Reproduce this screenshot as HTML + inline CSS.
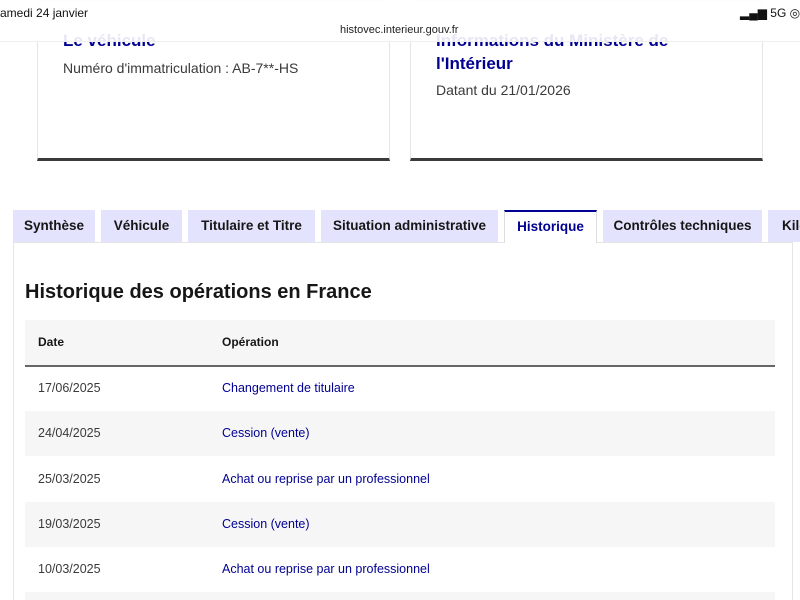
<!DOCTYPE html>
<html><head><meta charset="utf-8"><style>
*{margin:0;padding:0;box-sizing:border-box}
html,body{width:800px;height:600px;overflow:hidden}
body{background:#fff;font-family:"Liberation Sans",sans-serif;position:relative;color:#161616}
.abs{position:absolute;white-space:nowrap}
.card{position:absolute;top:0;height:161px;background:#fff;border:1px solid #e5e5e5;border-bottom:3px solid #3a3a3a}
.ct{position:absolute;color:#000091;font-weight:bold;font-size:17px;line-height:23px;white-space:nowrap}
.cs{position:absolute;color:#3a3a3a;font-size:14px;white-space:nowrap}
.top{position:absolute;left:0;top:0;width:800px;height:42px;background:rgba(255,255,255,0.9);border-bottom:1px solid #eee}
.tab{position:absolute;top:210px;height:32px;background:#e3e3fd;font-size:13.5px;font-weight:bold;color:#161616;line-height:32px;text-align:center;white-space:nowrap;overflow:hidden}
.tab.act{background:#fff;color:#000091;border-top:2px solid #000091;height:33px;line-height:30px;border-left:1px solid #ddd;border-right:1px solid #ddd}
.panel{position:absolute;left:13px;top:242px;width:780px;height:360px;border:1px solid #e5e5e5}
.row{position:absolute;left:25px;width:750px;height:45px;font-size:12.5px;line-height:45px;white-space:nowrap}
.row .d{position:absolute;left:13px;color:#3a3a3a}
.row .o{position:absolute;left:197px;color:#000091}
.g{background:#f6f6f6}
</style></head><body>
<div class="card" style="left:37px;width:353px"></div>
<div class="card" style="left:410px;width:353px"></div>
<div class="ct" style="left:63px;top:29px">Le véhicule</div>
<div class="cs" style="left:63px;top:60px">Numéro d'immatriculation : AB-7**-HS</div>
<div class="ct" style="left:436px;top:29px">Informations du Ministère de</div>
<div class="ct" style="left:436px;top:52px">l'Intérieur</div>
<div class="cs" style="left:436px;top:82px">Datant du 21/01/2026</div>
<div class="top"></div>
<div class="abs" style="left:0;top:6px;font-size:12px;color:#111">amedi 24 janvier</div>
<div class="abs" style="left:740px;top:6px;font-size:12px;color:#111">▂▄▆ 5G ◎ 8</div>
<div class="abs" style="left:340px;top:24px;font-size:11px;color:#222">histovec.interieur.gouv.fr</div>

<div class="panel"></div>
<div class="tab" style="left:13px;width:82px">Synthèse</div>
<div class="tab" style="left:101px;width:81px">Véhicule</div>
<div class="tab" style="left:188px;width:127px">Titulaire et Titre</div>
<div class="tab" style="left:321px;width:177px">Situation administrative</div>
<div class="tab act" style="left:504px;width:93px">Historique</div>
<div class="tab" style="left:603px;width:159px">Contrôles techniques</div>
<div class="tab" style="left:768px;width:40px;text-align:left;padding-left:14px">Kilométrage</div>

<div class="abs" style="left:25px;top:281px;font-size:20px;font-weight:bold;color:#161616">Historique des opérations en France</div>
<div class="row g" style="top:320px;height:47px;border-bottom:2px solid #666;font-weight:bold;font-size:12px;line-height:44px"><span class="d" style="color:#161616">Date</span><span class="o" style="color:#161616">Opération</span></div>
<div class="row" style="top:366px"><span class="d">17/06/2025</span><span class="o">Changement de titulaire</span></div>
<div class="row g" style="top:411px"><span class="d">24/04/2025</span><span class="o">Cession (vente)</span></div>
<div class="row" style="top:457px"><span class="d">25/03/2025</span><span class="o">Achat ou reprise par un professionnel</span></div>
<div class="row g" style="top:502px"><span class="d">19/03/2025</span><span class="o">Cession (vente)</span></div>
<div class="row" style="top:547px"><span class="d">10/03/2025</span><span class="o">Achat ou reprise par un professionnel</span></div>
<div class="row g" style="top:592px;height:8px"></div>
</body></html>
